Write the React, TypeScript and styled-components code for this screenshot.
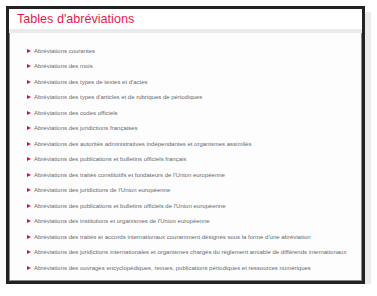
import React from "react";
import styled, { createGlobalStyle } from "styled-components";

const Global = createGlobalStyle`
  html, body { margin: 0; padding: 0; background: #ffffff; }
  body { font-family: "Liberation Sans", Arial, sans-serif; }
`;

const Frame = styled.div`
  margin: 6px 0 0 6px;
  width: 359px;
  height: 278px;
  box-sizing: border-box;
  border: 3px solid #222222;
  background: #fdfdfd;
  box-shadow: inset 0 0 0 1px #8a8a8a, 6px 6px 0 0 #ebebeb;
  display: flex;
  flex-direction: column;
  overflow: hidden;
`;

const Header = styled.div`
  height: 20px;
  padding-left: 8px;
  background: #ffffff;
  border-bottom: 4px solid #ebebeb;
  flex-shrink: 0;
`;

const Title = styled.h1`
  margin: 0;
  font-size: 12.6px;
  line-height: 20px;
  font-weight: normal;
  color: #e8194f;
`;

const List = styled.ul`
  list-style: none;
  margin: 0;
  padding: 10px 0 0 18px;
`;

const Item = styled.li`
  display: flex;
  align-items: center;
  gap: 3px;
  height: 15.5px;
  font-size: 6px;
  color: #666a70;
  white-space: nowrap;
`;

const Bullet = styled.span`
  width: 0;
  height: 0;
  border-top: 2.5px solid transparent;
  border-bottom: 2.5px solid transparent;
  border-left: 4px solid #c8143f;
  flex-shrink: 0;
`;

const items = [
  "Abréviations courantes",
  "Abréviations des mois",
  "Abréviations des types de textes et d'actes",
  "Abréviations des types d'articles et de rubriques de périodiques",
  "Abréviations des codes officiels",
  "Abréviations des juridictions françaises",
  "Abréviations des autorités administratives indépendantes et organismes assimilés",
  "Abréviations des publications et bulletins officiels français",
  "Abréviations des traités constitutifs et fondateurs de l'Union européenne",
  "Abréviations des juridictions de l'Union européenne",
  "Abréviations des publications et bulletins officiels de l'Union européenne",
  "Abréviations des institutions et organismes de l'Union européenne",
  "Abréviations des traités et accords internationaux couramment désignés sous la forme d'une abréviation",
  "Abréviations des juridictions internationales et organismes chargés du règlement amiable de différends internationaux",
  "Abréviations des ouvrages encyclopédiques, revues, publications périodiques et ressources numériques",
];

export default function App() {
  return (
    <>
      <Global />
      <Frame>
        <Header>
          <Title>Tables d'abréviations</Title>
        </Header>
        <List>
          {items.map((t) => (
            <Item key={t}>
              <Bullet />
              <span>{t}</span>
            </Item>
          ))}
        </List>
      </Frame>
    </>
  );
}
